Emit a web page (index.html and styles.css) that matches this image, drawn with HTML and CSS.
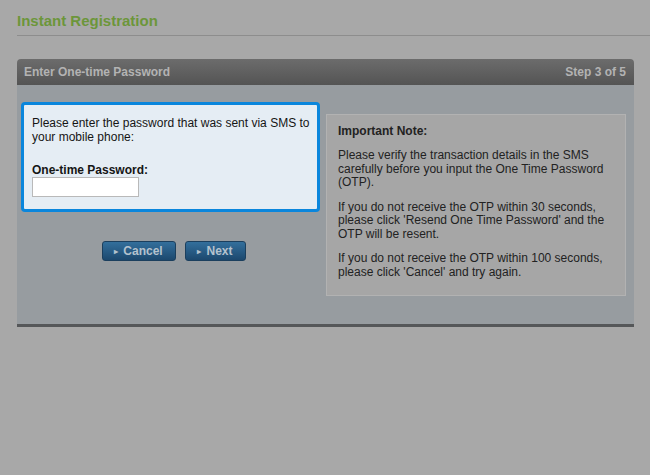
FILE: index.html
```html
<!DOCTYPE html>
<html lang="en">
<head>
    <meta charset="UTF-8">
    <meta name="viewport" content="width=device-width, initial-scale=1.0">
    <title>Instant Registration</title>
<link rel="stylesheet" href="styles.css">
</head>
<body>
    <div class="page">
        <h1 class="page-title">Instant Registration</h1>

        <div class="panel">
            <div class="panel-head">
                <span>Enter One-time Password</span>
                <span>Step 3 of 5</span>
            </div>

            <div class="panel-body">
                <div class="left-col">
                    <div class="otp-box">
                        <p>Please enter the password that was sent via SMS to your mobile phone:</p>
                        <label for="otp">One-time Password:</label>
                        <input type="text" id="otp" class="otp-input">
                    </div>

                    <div class="actions">
                        <button type="button" class="btn btn-cancel"><span class="arrow">&#9656;</span>Cancel</button>
                        <button type="button" class="btn btn-next"><span class="arrow">&#9656;</span>Next</button>
                    </div>
                </div>

                <div class="note">
                    <h2>Important Note:</h2>
                    <p>Please verify the transaction details in the SMS carefully before you input the One Time Password (OTP).</p>
                    <p>If you do not receive the OTP within 30 seconds, please click 'Resend One Time Password' and the OTP will be resent.</p>
                    <p>If you do not receive the OTP within 100 seconds, please click 'Cancel' and try again.</p>
                </div>
            </div>
        </div>
    </div>
</body>
</html>
```

FILE: styles.css
```css
* {
    margin: 0;
    padding: 0;
    box-sizing: border-box;
    font-family: "Liberation Sans", Arial, sans-serif;
}

body {
    background-color: #a8a8a8;
    min-height: 100vh;
}

.page {
    padding-left: 17px;
}

.page-title {
    height: 36px;
    padding-top: 12px;
    font-size: 15px;
    line-height: 18px;
    color: #6c963a;
    border-bottom: 1px solid #8d8d8d;
}

.panel {
    width: 617px;
    margin-top: 23px;
}

.panel-head {
    height: 26px;
    display: flex;
    align-items: center;
    justify-content: space-between;
    padding: 0 8px 0 7px;
    background: linear-gradient(#6c6c6c, #545454);
    border-radius: 4px 4px 0 0;
    color: #b3b3b3;
    font-size: 12px;
    font-weight: bold;
}

.panel-body {
    display: flex;
    gap: 6px;
    padding: 17px 8px 28px 4px;
    background: #979ca0;
    border-bottom: 3px solid #555759;
}

.left-col {
    width: 299px;
}

.otp-box {
    height: 110px;
    padding: 11px 2px 0 8px;
    background: #e5edf4;
    border: 3px solid #0a86dc;
    border-radius: 4px;
    color: #151515;
    font-size: 12px;
    line-height: 14px;
}

.otp-box p {
    margin-bottom: 19px;
}

.otp-box label {
    display: block;
    font-weight: bold;
}

.otp-input {
    display: block;
    width: 107px;
    height: 20px;
    background: #fff;
    border: 1px solid #b9b9b9;
}

.actions {
    display: flex;
    justify-content: center;
    gap: 9px;
    margin-top: 29px;
    padding-left: 7px;
}

.btn {
    height: 20px;
    padding: 0 12px 0 11px;
    background: linear-gradient(#336f9c, #1c486e);
    border: 1px solid #1b3f5e;
    border-radius: 3px;
    color: #b4c2ce;
    font-size: 12px;
    font-weight: bold;
}

.btn-cancel {
    width: 74px;
}

.btn-next {
    width: 61px;
}

.arrow {
    font-size: 8px;
    margin-right: 5px;
    vertical-align: 1px;
}

.note {
    width: 300px;
    margin-top: 12px;
    padding: 9px 11px 16px;
    background: #a6a6a6;
    border: 1px solid #b2b2b2;
    color: #222;
    font-size: 12px;
    line-height: 13.5px;
}

.note h2 {
    font-size: 12px;
    line-height: 14px;
    margin-bottom: 11px;
}

.note p {
    margin-bottom: 11px;
}

.note p:last-child {
    margin-bottom: 0;
}
```
